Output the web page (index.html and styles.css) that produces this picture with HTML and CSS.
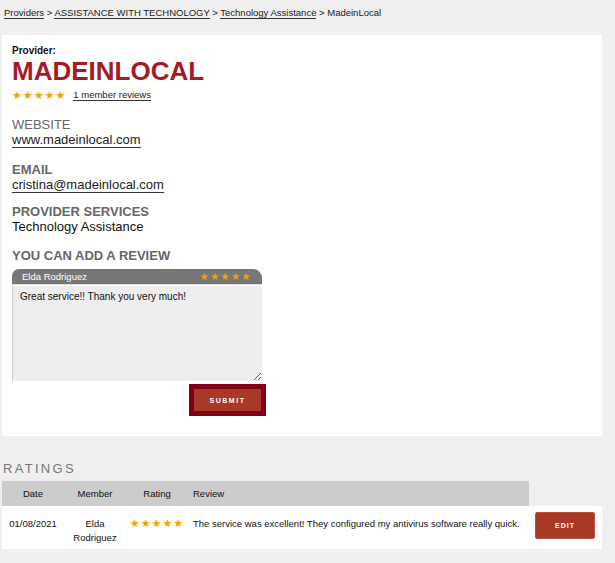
FILE: index.html
```html
<!DOCTYPE html>
<html lang="en">
<head>
  <meta charset="UTF-8">
  <meta name="viewport" content="width=device-width, initial-scale=1.0">
  <title>MadeinLocal - Provider</title>
  <link rel="stylesheet" href="styles.css">
</head>
<body>
  <div class="crumbs">
    <a href="#">Providers</a> &gt; <a href="#">ASSISTANCE WITH TECHNOLOGY</a> &gt; <a href="#">Technology Assistance</a> &gt; MadeinLocal
  </div>

  <div class="panel">
    <div class="provider-label">Provider:</div>
    <h1 class="provider-name">MADEINLOCAL</h1>
    <div class="score">
      <span class="stars">★★★★★</span>
      <a href="#" class="link small">1 member reviews</a>
    </div>

    <div class="field">
      <h2 class="label thin">WEBSITE</h2>
      <a href="#" class="link">www.madeinlocal.com</a>
    </div>

    <div class="field">
      <h2 class="label">EMAIL</h2>
      <a href="#" class="link">cristina@madeinlocal.com</a>
    </div>

    <div class="field services">
      <h2 class="label">PROVIDER SERVICES</h2>
      <div class="value">Technology Assistance</div>
    </div>

    <div class="field review">
      <h2 class="label">YOU CAN ADD A REVIEW</h2>
      <form class="review-form" onsubmit="return false">
        <div class="review-head">
          <span>Elda Rodriguez</span>
          <span class="stars">★★★★★</span>
        </div>
        <textarea class="review-text">Great service!! Thank you very much!</textarea>
        <div class="submit-wrap">
          <button class="submit-btn">SUBMIT</button>
        </div>
      </form>
    </div>
  </div>

  <h3 class="ratings-title">RATINGS</h3>
  <table class="ratings">
    <thead>
      <tr>
        <th class="col-date">Date</th>
        <th class="col-member">Member</th>
        <th class="col-rating">Rating</th>
        <th class="col-review">Review</th>
        <th class="col-edit"></th>
      </tr>
    </thead>
    <tbody>
      <tr>
        <td>01/08/2021</td>
        <td>Elda<br>Rodriguez</td>
        <td><span class="stars">★★★★★</span></td>
        <td class="review-cell">The service was excellent! They configured my antivirus software really quick.</td>
        <td class="edit-cell"><button class="edit-btn">EDIT</button></td>
      </tr>
    </tbody>
  </table>
</body>
</html>
```

FILE: styles.css
```css
body {
  font-family: Arial, "Liberation Sans", sans-serif;
  background: #efefef;
  color: #111;
  margin: 0;
  padding: 7px 13px 0 2px;
}
a {
  color: #222;
  text-decoration: none;
}
.crumbs {
  font-size: 9.5px;
  line-height: 12px;
  padding-left: 2px;
  margin-bottom: 16px;
  color: #222;
}
.crumbs a {
  border-bottom: 1px solid #333;
}
.panel {
  background: #fff;
  padding: 10px 10px 20px 10px;
}
.provider-label {
  font-size: 10px;
  font-weight: bold;
  line-height: 12px;
}
.provider-name {
  margin: 1px 0 0;
  font-size: 26px;
  line-height: 26px;
  color: #a51b25;
}
.score {
  display: flex;
  align-items: center;
  gap: 7px;
  margin-top: 4px;
  height: 14px;
}
.stars {
  font-family: "DejaVu Sans", sans-serif;
  font-size: 11px;
  letter-spacing: 1px;
  color: #f5a300;
}
.link {
  border-bottom: 1px solid #333;
  font-size: 13px;
}
.link.small {
  font-size: 9.5px;
}
.field {
  margin-top: 15px;
  font-size: 13px;
  line-height: 15px;
}
.field.services {
  margin-top: 12px;
}
.field.review {
  margin-top: 14px;
}
.label {
  margin: 0;
  font-size: 13px;
  line-height: 15px;
  font-weight: bold;
  color: #666;
}
.label.thin {
  font-weight: normal;
}
.value {
  color: #111;
}
.review-form {
  width: 254px;
  margin-top: 6px;
  display: flex;
  flex-direction: column;
}
.review-head {
  width: 250px;
  height: 16px;
  box-sizing: border-box;
  padding: 0 10px;
  background: #777;
  color: #fff;
  font-size: 9.5px;
  border-radius: 7px 9px 0 0;
  display: flex;
  justify-content: space-between;
  align-items: center;
  border-bottom: 1px solid #ddd;
}
.review-head .stars {
  font-size: 10px;
  letter-spacing: 1.5px;
}
.review-text {
  width: 250px;
  height: 95px;
  box-sizing: border-box;
  margin: 1px 0 0;
  padding: 5px 7px;
  background: #eee;
  border: none;
  border-left: 1px solid #ccc;
  font-family: Arial, "Liberation Sans", sans-serif;
  font-size: 10px;
  color: #111;
}
.submit-wrap {
  display: flex;
  justify-content: flex-end;
  margin-top: 3px;
}
.submit-btn {
  width: 77px;
  height: 32px;
  background: #a93826;
  border: 5px solid #800018;
  color: #fff;
  font-family: Arial, "Liberation Sans", sans-serif;
  font-size: 7px;
  font-weight: bold;
  letter-spacing: 1.5px;
  cursor: pointer;
}
.ratings-title {
  margin: 25px 0 5px;
  padding-left: 1px;
  font-size: 13px;
  line-height: 15px;
  font-weight: normal;
  letter-spacing: 2.3px;
  color: #777;
}
.ratings {
  width: 600px;
  border-collapse: collapse;
  font-size: 9.5px;
}
.ratings th {
  height: 25px;
  padding: 0;
  font-weight: normal;
  background: #ccc;
  text-align: center;
}
.ratings th.col-review {
  text-align: left;
  padding-left: 5px;
}
.ratings th.col-edit {
  background: transparent;
}
.col-date, .col-member, .col-rating {
  width: 62px;
}
.col-edit {
  width: 73px;
}
.ratings td {
  background: #fff;
  vertical-align: top;
  text-align: center;
  line-height: 14px;
  padding: 11px 0 4px;
}
.ratings td.review-cell {
  text-align: left;
  padding-left: 5px;
  white-space: nowrap;
}
.ratings td.edit-cell {
  padding: 6px 7px 0 6px;
}
.edit-btn {
  width: 60px;
  height: 27px;
  background: #a93826;
  border: 1px solid #b9503f;
  border-radius: 2px;
  color: #fff;
  font-family: Arial, "Liberation Sans", sans-serif;
  font-size: 7px;
  font-weight: bold;
  letter-spacing: 1px;
  cursor: pointer;
}
```
